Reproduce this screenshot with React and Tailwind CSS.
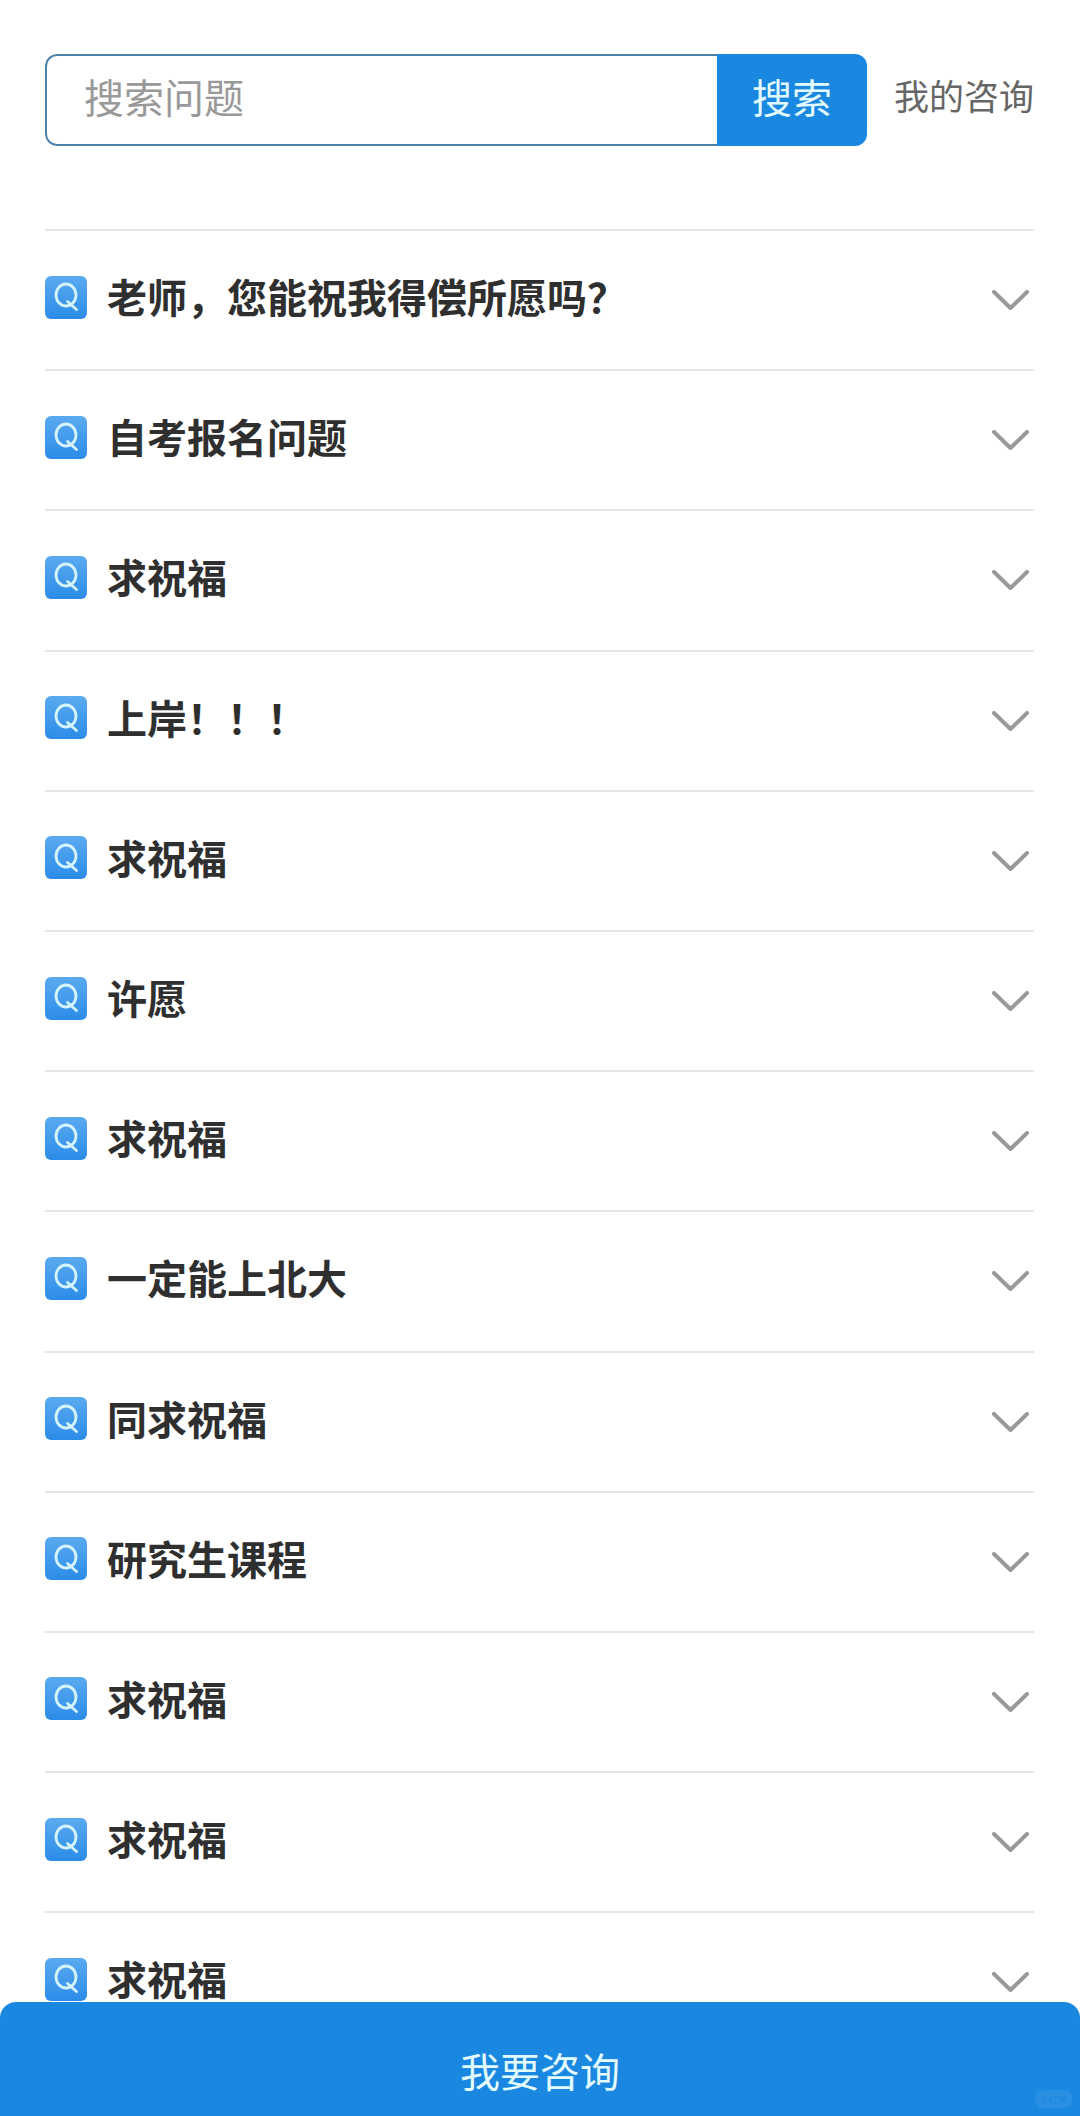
import React from "react";

const items = [
  "老师，您能祝我得偿所愿吗？",
  "自考报名问题",
  "求祝福",
  "上岸！！！",
  "求祝福",
  "许愿",
  "求祝福",
  "一定能上北大",
  "同求祝福",
  "研究生课程",
  "求祝福",
  "求祝福",
  "求祝福",
];

function QIcon() {
  return (
    <div className="mb-[6px] flex h-[43px] w-[42px] shrink-0 items-center justify-center rounded-[6px] bg-gradient-to-b from-[#5aaaf0] to-[#2a8ce8]">
      <svg width="26" height="30" viewBox="0 0 26 30" fill="none" stroke="#d5f3fb" strokeWidth="2.8">
        <ellipse cx="13" cy="13" rx="10" ry="11" />
        <path d="M14.5 19.5 L23.5 27.5" strokeLinecap="round" />
      </svg>
    </div>
  );
}

function Row({ text }) {
  return (
    <div className="flex h-[140.2px] items-center border-t-2 border-[#e6e6e6] pr-[5px]">
      <QIcon />
      <div className="mb-[8px] ml-[20px] flex-1 text-[40px] font-semibold leading-[48px] text-[#2f2f2f]">{text}</div>
      <svg width="37" height="20" viewBox="0 0 37 20" fill="none" stroke="#999999" strokeWidth="4" strokeLinecap="round" strokeLinejoin="round">
        <path d="M2 2 L18.5 18 L35 2" />
      </svg>
    </div>
  );
}

export default function App() {
  return (
    <div
      className="relative h-[2116px] w-[1080px] overflow-hidden bg-white"
      style={{ fontFamily: '"Noto Sans CJK SC", "Noto Sans", sans-serif' }}
    >
      <div className="flex items-start pl-[45px] pr-[46px] pt-[54px]">
        <div className="flex h-[92px] w-[822px] overflow-hidden rounded-[12px]">
          <div className="flex flex-1 items-center rounded-l-[12px] border-2 border-r-0 border-[#4a82a8] pb-[8px] pl-[37px] text-[40px] text-[#999999]">
            搜索问题
          </div>
          <div className="flex w-[150px] items-center justify-center bg-[#1a87e0] pb-[8px] text-[40px] text-[#e2fbff]">
            搜索
          </div>
        </div>
        <div className="ml-auto pt-[17px] text-[35px] leading-[48px] text-[#666666]">我的咨询</div>
      </div>
      <div className="ml-[45px] mr-[46px] mt-[83px]">
        {items.map((t, i) => (
          <Row key={i} text={t} />
        ))}
      </div>
      <div className="absolute bottom-0 left-0 right-0 flex h-[114px] items-center justify-center rounded-t-[16px] bg-[#1a87e0] pt-[22px] text-[40px] text-[#e2fbff]">
        我要咨询
      </div>
      <div className="absolute bottom-[8px] right-[8px] flex h-[18px] w-[37px] items-center justify-center rounded-[8px] bg-[#2a90e4] text-[9px] leading-none text-[#1a87e0]">
        小红书
      </div>
    </div>
  );
}
